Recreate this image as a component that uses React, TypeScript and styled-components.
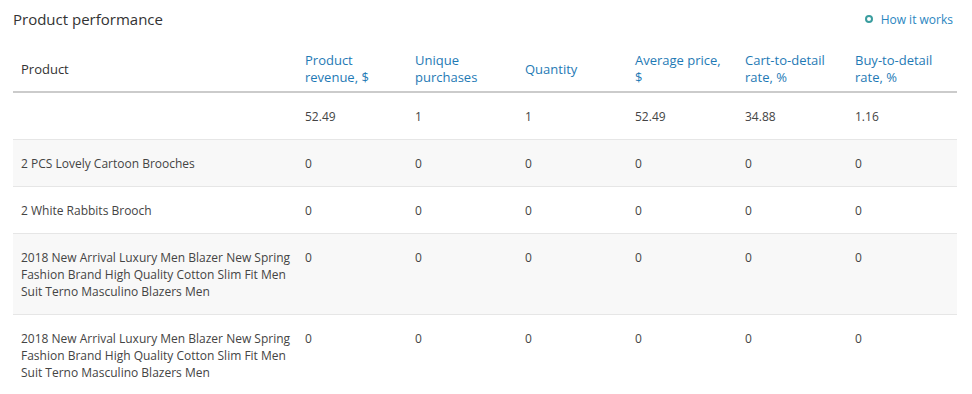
import { createGlobalStyle } from "styled-components";
import styled from "styled-components";

const GlobalStyle = createGlobalStyle`
  body {
    margin: 0;
    background: #fff;
    font-family: "Open Sans", "Noto Sans", sans-serif;
    color: #333;
  }
`;

type Row = { name: string; values: string[] };

const columns = [
  "Product revenue, $",
  "Unique purchases",
  "Quantity",
  "Average price, $",
  "Cart-to-detail rate, %",
  "Buy-to-detail rate, %",
];

const longName =
  "2018 New Arrival Luxury Men Blazer New Spring Fashion Brand High Quality Cotton Slim Fit Men Suit Terno Masculino Blazers Men";

const rows: Row[] = [
  { name: "", values: ["52.49", "1", "1", "52.49", "34.88", "1.16"] },
  { name: "2 PCS Lovely Cartoon Brooches", values: ["0", "0", "0", "0", "0", "0"] },
  { name: "2 White Rabbits Brooch", values: ["0", "0", "0", "0", "0", "0"] },
  { name: longName, values: ["0", "0", "0", "0", "0", "0"] },
  { name: longName, values: ["0", "0", "0", "0", "0", "0"] },
];

export default function App() {
  return (
    <>
      <GlobalStyle />
      <StyledPanel>
        <StyledTop>
          <StyledTitle>Product performance</StyledTitle>
          <StyledHelpLink href="#">
            <StyledHelpDot />
            How it works
          </StyledHelpLink>
        </StyledTop>
        <StyledTable>
          <colgroup>
            <col style={{ width: 284 }} />
            {columns.map((c) => (
              <col key={c} style={{ width: 110 }} />
            ))}
          </colgroup>
          <thead>
            <tr>
              <StyledHeadCell $first>Product</StyledHeadCell>
              {columns.map((c) => (
                <StyledHeadCell key={c}>{c}</StyledHeadCell>
              ))}
            </tr>
          </thead>
          <tbody>
            {rows.map((row, i) => (
              <StyledRow key={i} $striped={i % 2 === 1}>
                <StyledCell $name>{row.name}</StyledCell>
                {row.values.map((v, j) => (
                  <StyledCell key={j}>{v}</StyledCell>
                ))}
              </StyledRow>
            ))}
          </tbody>
        </StyledTable>
      </StyledPanel>
    </>
  );
}

const StyledPanel = styled.div`
  padding: 8px 14px 0 13px;
`;

const StyledTop = styled.div`
  display: flex;
  align-items: center;
  justify-content: space-between;
  height: 22px;
`;

const StyledTitle = styled.h2`
  margin: 0;
  font-size: 15px;
  font-weight: 400;
  color: #333;
`;

const StyledHelpLink = styled.a`
  display: flex;
  align-items: center;
  gap: 8px;
  margin-right: 5px;
  font-size: 12px;
  color: #2a86bf;
  text-decoration: none;
`;

const StyledHelpDot = styled.span`
  width: 4px;
  height: 4px;
  border: 2px solid #3a9d9f;
  border-radius: 50%;
`;

const StyledTable = styled.table`
  width: 944px;
  margin-top: 14px;
  border-collapse: collapse;
  table-layout: fixed;
`;

const StyledHeadCell = styled.th<{ $first?: boolean }>`
  padding: 8px 8px 5px;
  text-align: left;
  vertical-align: middle;
  font-size: 13px;
  font-weight: 400;
  line-height: 17px;
  color: ${({ $first }) => ($first ? "#333" : "#1f7ab5")};
  border-bottom: 2px solid #cbcbcb;
`;

const StyledRow = styled.tr<{ $striped: boolean }>`
  background: ${({ $striped }) => ($striped ? "#f8f8f8" : "#fff")};
  border-bottom: 1px solid #e6e6e6;
`;

const StyledCell = styled.td<{ $name?: boolean }>`
  padding: 15px ${({ $name }) => ($name ? "2px" : "8px")} 14px 8px;
  vertical-align: top;
  font-size: 12px;
  line-height: 17px;
  color: #444;
`;
